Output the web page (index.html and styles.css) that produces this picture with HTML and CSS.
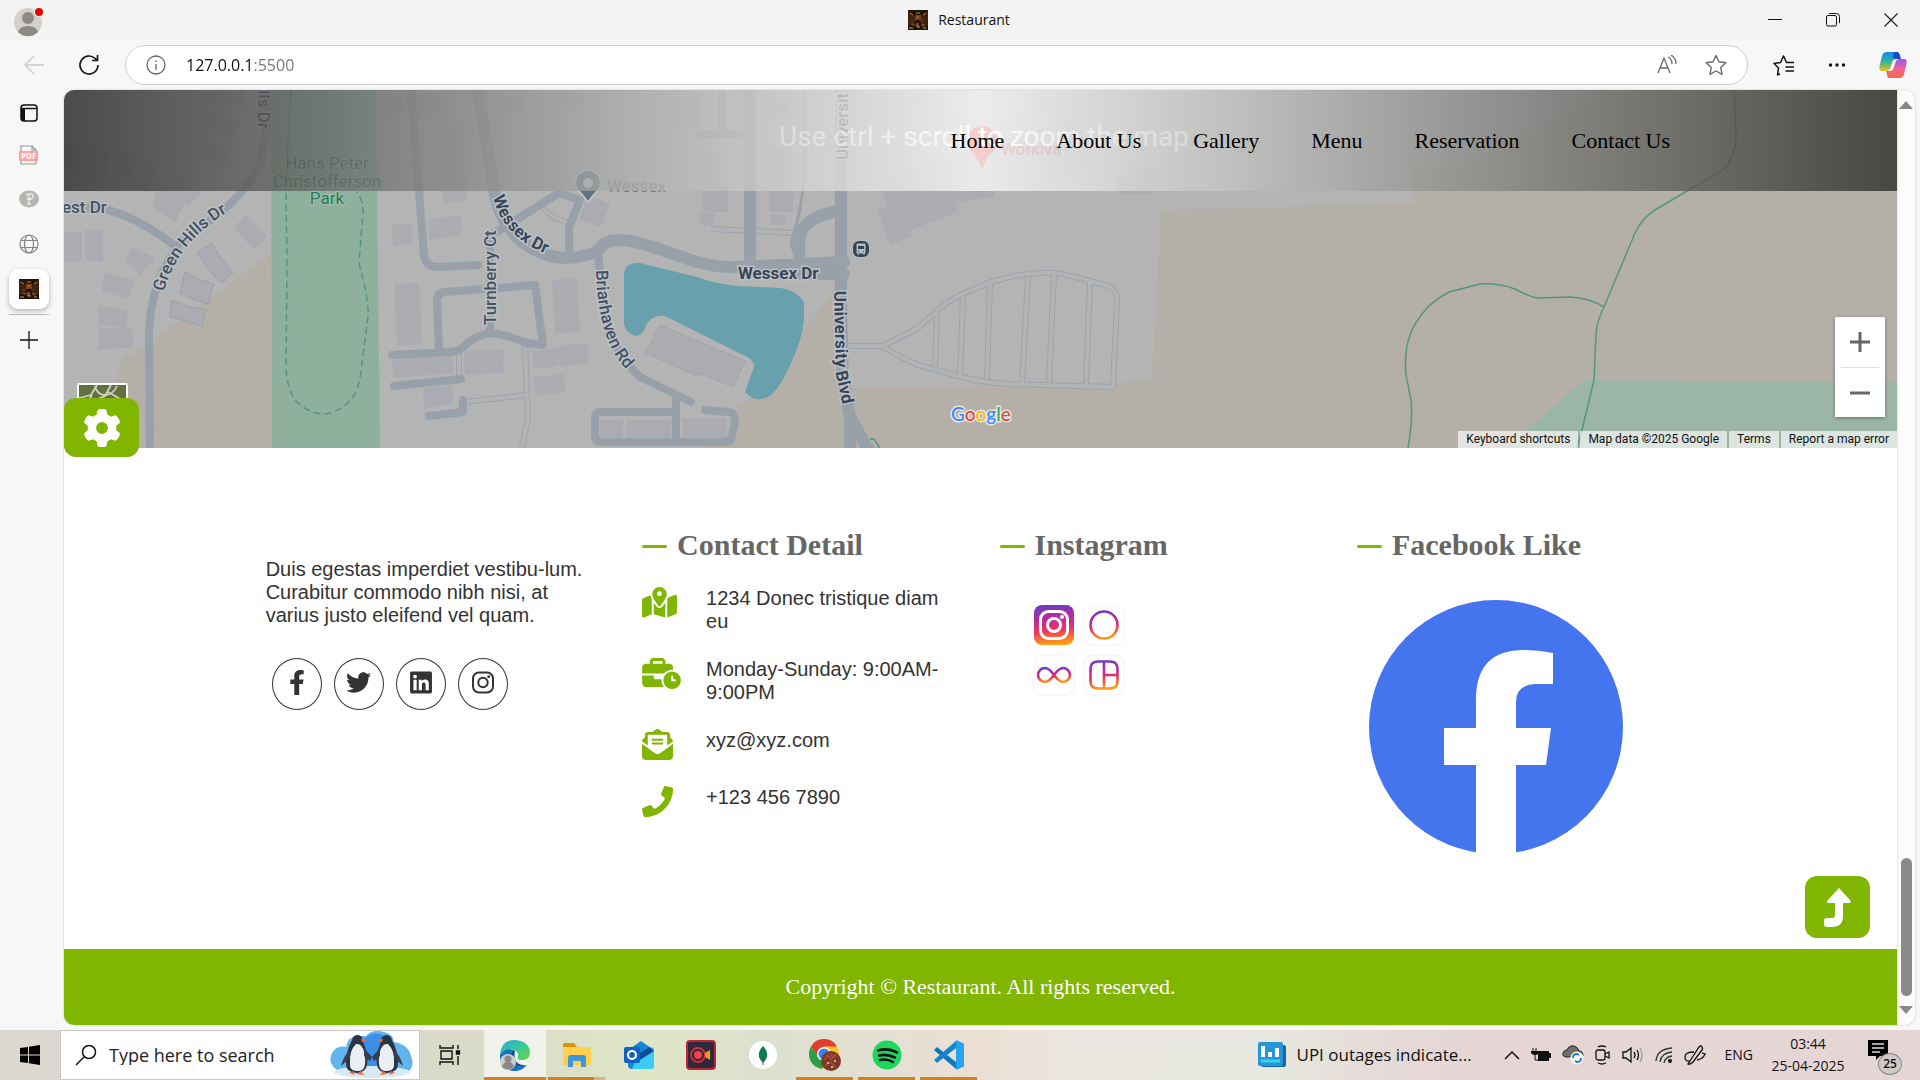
FILE: index.html
```html
<!DOCTYPE html>
<html lang="en">
<head>
<meta charset="utf-8">
<title>Restaurant</title>
<link rel="stylesheet" href="styles.css">
</head>
<body>
<svg class="defs" aria-hidden="true">
  <defs>
    <symbol id="bistro" viewBox="0 0 20 20">
      <rect width="20" height="20" fill="#20130a"/>
      <path d="M0 0l8 7v5l-8 4zM20 0l-8 7v5l8 4z" fill="#3d230f"/>
      <path d="M7 5h6v5H7z" fill="#7a4216"/>
      <path d="M2 3l3 2M18 3l-3 2M8 3h4M9 7h2" stroke="#c88028" stroke-width="1"/>
      <path d="M2 14l4-1v3zM13 13l5 2-4 2zM8 13h3v4H8z" fill="#8a4526"/>
      <path d="M1 18h4M9 17h3M15 18h3" stroke="#b8a878" stroke-width="1"/>
      <path d="M3 11h3M13 11h3M6 15h2" stroke="#3d5a24" stroke-width="1"/>
    </symbol>
    <linearGradient id="insta" x1="0.3" y1="0" x2="0.45" y2="1">
      <stop offset="0" stop-color="#6f3cc4"/><stop offset=".3" stop-color="#b52aa6"/><stop offset=".6" stop-color="#e62f62"/><stop offset="1" stop-color="#ff9a10"/>
    </linearGradient>
    <linearGradient id="instaFill" x1="0.3" y1="0" x2="0.4" y2="1">
      <stop offset="0" stop-color="#6a3cc4"/><stop offset=".35" stop-color="#bc2a9a"/><stop offset=".65" stop-color="#ee3560"/><stop offset="1" stop-color="#ffa210"/>
    </linearGradient>
    <linearGradient id="edge" x1="0" y1="0" x2="1" y2="1">
      <stop offset="0" stop-color="#2aa9dc"/><stop offset=".5" stop-color="#39c8a0"/><stop offset="1" stop-color="#6bd43a"/>
    </linearGradient>
    <linearGradient id="copA" x1="0" y1="0" x2="0" y2="1">
      <stop offset="0" stop-color="#1688f0"/><stop offset=".5" stop-color="#2fb59a"/><stop offset="1" stop-color="#f0c020"/>
    </linearGradient>
    <linearGradient id="copB" x1="0" y1="0" x2="0" y2="1">
      <stop offset="0" stop-color="#9a55f0"/><stop offset=".5" stop-color="#f0609a"/><stop offset="1" stop-color="#fa6a3a"/>
    </linearGradient>
  </defs>
</svg>

<header class="titlebar">
  <svg class="avatar" width="34" height="36" viewBox="0 0 34 36">
    <circle cx="14" cy="20" r="14" fill="#d2d0cb"/><circle cx="14" cy="16" r="6" fill="#8d8a86"/>
    <path d="M4 30c2-8 18-8 20 0a14 14 0 0 1-20 0z" fill="#8d8a86"/>
    <circle cx="25" cy="10" r="5" fill="#f3f3f3"/><circle cx="25" cy="10" r="4" fill="#e60000"/>
  </svg>
  <div class="window-title"><svg width="20" height="20"><use href="#bistro"/></svg><span>Restaurant</span></div>
  <div class="window-controls">
    <button aria-label="Minimize"><svg width="14" height="14" viewBox="0 0 14 14"><path d="M0 6.500h14" stroke="#111"/></svg></button>
    <button aria-label="Restore"><svg width="14" height="14" viewBox="0 0 14 14" fill="none" stroke="#111"><rect x=".5" y="2.500" width="10" height="10.500" rx="1.500"/><path d="M3 .5h7.500q3 0 3 3V10"/></svg></button>
    <button aria-label="Close"><svg width="14" height="14" viewBox="0 0 14 14"><path d="M.5.5l13 13M13.500.5l-13 13" stroke="#222" stroke-width="1.200"/></svg></button>
  </div>
</header>

<div class="toolbar">
  <button class="tool" aria-label="Back"><svg width="22" height="22" viewBox="0 0 22 22" fill="none" stroke="#c9c9c9" stroke-width="1.300"><path d="M21 11H2M11 2l-9 9 9 9"/></svg></button>
  <button class="tool" aria-label="Refresh"><svg width="22" height="22" viewBox="0 0 22 22" fill="none" stroke="#1a1a1a" stroke-width="1.700"><path d="M20 11a9 9 0 1 1-3-6.700L19 6"/><path d="M19.500 1v5.500H14"/></svg></button>
  <div class="address">
    <svg width="20" height="20" viewBox="0 0 20 20" fill="none" stroke="#666" stroke-width="1.300"><circle cx="10" cy="10" r="9"/><path d="M10 9v6M10 5.500v1.500"/></svg>
    <input type="text" aria-label="Address" value="127.0.0.1:5500">
    <svg width="20" height="20" viewBox="0 0 20 20" fill="none" stroke="#6a6a6a" stroke-width="1.300"><path d="M1 18L7 3l6 15M3 13h8M11 2q4 2 4 7M14 0q5 3 5 9"/></svg>
    <svg width="22" height="22" viewBox="0 0 22 22" fill="none" stroke="#6a6a6a" stroke-width="1.400" stroke-linejoin="round"><path d="M11 1.500l3 6.300 6.800 1-5 4.700 1.200 6.800-6-3.300-6 3.300 1.200-6.800-5-4.700 6.800-1z"/></svg>
  </div>
  <button class="tool" aria-label="Favorites"><svg width="22" height="22" viewBox="0 0 22 22" fill="none" stroke="#111" stroke-width="1.500" stroke-linejoin="round"><path d="M7 20l-2.500.8 1-6.800L1 9.500l6.500-1L10.500 2l3 6.500H21M12.500 13H21M12.500 17H21"/></svg></button>
  <button class="tool" aria-label="Settings and more"><svg width="18" height="6" viewBox="0 0 18 6" fill="#111"><circle cx="2.500" cy="3" r="1.700"/><circle cx="9" cy="3" r="1.700"/><circle cx="15.500" cy="3" r="1.700"/></svg></button>
  <button class="tool" aria-label="Copilot"><svg width="28" height="28" viewBox="0 0 28 28">
    <path d="M8 1h10q2 0 3 4l1 3h-5q-3 0-4 4l-2 6q-1 2-4 2H3q-4 0-2-7l2-8q1-4 5-4z" fill="url(#copA)"/>
    <path d="M15 1h3q2 0 3 4l1 3h-5q-3 0-3-3z" fill="#1a48c8"/>
    <path d="M20 27H10q-2 0-2-4l-1-3h4q3 0 4-4l2-6q1-2 4-2h4q4 0 2 7l-2 8q-1 4-5 4z" fill="url(#copB)"/>
  </svg></button>
</div>

<div class="workspace">
  <nav class="tabs" aria-label="Open tabs">
    <button aria-label="Tab actions"><svg width="18" height="18" viewBox="0 0 18 18"><rect x="1" y="1" width="16" height="16" rx="3" fill="none" stroke="#111" stroke-width="1.500"/><path d="M1 4.500h16" stroke="#111" stroke-width="1.500"/><path d="M1 5h4v12H3l-2-2z" fill="#111"/></svg></button>
    <button aria-label="PDF"><svg width="20" height="20" viewBox="0 0 20 20"><path d="M2 6V1h11l4 4v1M2 16v3h15v-3M13 1v4h4" fill="none" stroke="#999" stroke-width="1.200"/><rect x="0" y="6" width="19" height="10" fill="#fba3a3"/><text x="2" y="14" class="pdf">PDF</text></svg></button>
    <button aria-label="Site"><svg width="20" height="18" viewBox="0 0 20 18"><ellipse cx="10" cy="9" rx="10" ry="8.500" fill="#b2b8ae"/><path d="M7 5q7-3 7 1 0 4-6 3M10 4v10M8 14h4" fill="none" stroke="#e8ebe6" stroke-width="1.400"/></svg></button>
    <button aria-label="Web page"><svg width="20" height="20" viewBox="0 0 20 20" fill="none" stroke="#858585" stroke-width="1.200"><circle cx="10" cy="10" r="9"/><ellipse cx="10" cy="10" rx="4.500" ry="9"/><path d="M2 6.500h16M2 13.500h16"/></svg></button>
    <button class="current" aria-label="Restaurant"><svg width="20" height="20"><use href="#bistro"/></svg></button>
    <hr>
    <button aria-label="New tab"><svg width="18" height="18" viewBox="0 0 18 18"><path d="M9 0v18M0 9h18" stroke="#111" stroke-width="1.300"/></svg></button>
  </nav>

  <main class="page">
    <nav class="menu">
      <a href="#home">Home</a><a href="#about">About Us</a><a href="#gallery">Gallery</a><a href="#menu">Menu</a><a href="#reservation">Reservation</a><a href="#contact">Contact Us</a>
    </nav>

    <section class="map" aria-label="Map">
      <svg class="map-art" viewBox="64 90 1833 358" preserveAspectRatio="xMinYMin slice">
        <rect x="64" y="90" width="1833" height="358" fill="#b4b4b4"/>
        <path d="M271 254L153 340 133 354 124 356 115 383V448H272zM834 293L803 330 787 373 736 408 738 437 701 448H1897V90H1606L1468 163H1413V204L1280 207 1161 210 1152 382 1011 385 854 388 842 360z" fill="#b4afa7"/>
        <path d="M271 90H376L380 448H272z" fill="#8fb09c"/>
        <path d="M1584 380L1897 382V448H1505z" fill="#9bb5a6"/>
        <g fill="#abacb2">
          <path d="M206 90h38v17h-38zM209 111l33 9-8 18-31-9zM204 136l30 14-13 17-23-16zM64 145h16v28H64zM88 149l20 2-3 31-20-1zM119 148l19 3-6 28-19-3zM139 161l20 7-12 25-15-6zM177 173l25 20-14 14-20-16zM158 183l28 18-11 22-23-17z"/>
          <path d="M64 232h18v30H64zM85 230h18v31H85zM132 247l24 11-16 17-14-14zM104 273l31 7-6 19-27-8zM99 305l29 6-2 16-28-2zM99 329l32-2 3 20-36 3zM245 214l22 22-13 14-20-22z"/>
          <path d="M384 96h18v22h-18zM414 96h35v21h-35zM436 125l26-2 5 78-24 2zM428 219l33-4 1 20-33 5zM392 225l19-2 2 20-20 3zM394 284l25-2 3 62-25 2zM552 280l25-2 3 54-25 2zM392 360l60-5 2 18-60 5zM423 388l29-3 1 19-29 5zM464 352l40-3-1 24-38 2zM533 351l26-3v18l-25 3zM559 346l28-3 2 20-29 4zM534 377l30-3 1 18-30 4zM588 195l22 9-9 23-22-8zM503 96h22v15h-22zM560 95h25v14h-25z"/>
          <path d="M672 96h27v29h-27zM703 150h25v62h-25zM700 213h14v12h-14zM769 150h24v62h-24zM771 214h15v11h-15zM768 98h22v19h-22zM1082 117l-204 60 9 30-9 3 12 35 21-9v-6l47-18-2-10 37-5 1-5 34-9 5 10 22-9 35-16zM1115 178l20-12 30 8-16 20h-29zM600 420h23v20h-23zM626 420h45v20h-45zM683 418h44v20h-44z"/>
          <path d="M197 253l15-10 8 13 4 6 9 10-11 11-9-8-5-8zM185 272l13 7 16 5-6 20-16-5-12-6zM171 300l17 6 18 4-4 16-32-9z" stroke="#9ca0ab"/>
          <path d="M646 353L660 325 745 361 733 387 700 373 697 376z" stroke="#a0a4ad"/>
        </g>
        <g fill="none" stroke="#9fa3a9" stroke-width="6" stroke-linejoin="round">
          <path d="M846 346H883L918 328 946 303 967 292 991 282Q1028 271 1056 273 1075 276 1111 287 1117 291 1117 300L1113 387 1007 384Q980 382 958 376L918 365Q895 355 883 346M937 315L935 367M963 297L960 375M990 283L987 378M1028 277L1022 383M1054 275L1049 383M1090 282L1086 384M459 353V380M525 343L527 397 528 417 522 448M465 402L527 395M542 205Q545 215 568 223M795 233L711 229"/>
          <path stroke="#b1b3b5" stroke-width="4" d="M846 346H883L918 328 946 303 967 292 991 282Q1028 271 1056 273 1075 276 1111 287 1117 291 1117 300L1113 387 1007 384Q980 382 958 376L918 365Q895 355 883 346M937 315L935 367M963 297L960 375M990 283L987 378M1028 277L1022 383M1054 275L1049 383M1090 282L1086 384M459 353V380M525 343L527 397 528 417 522 448M465 402L527 395M542 205Q545 215 568 223M795 233L711 229"/>
          <path d="M918 95Q930 123 984 124T1046 92" stroke="#a8aaac" stroke-width="5"/><path d="M918 95Q930 123 984 124T1046 92" stroke="#b1b3b5" stroke-width="3"/>
        </g>
        <path d="M624 275Q624 262 640 263L697 277Q715 284 740 286L780 288Q795 289 804 302V320Q802 340 791 363 782 385 771 395 757 405 745 392L754 367Q754 360 747 357L669 318Q658 312 648 322L644 330Q640 338 633 335 624 330 624 323z" fill="#68a0ae"/>
        <g fill="none" stroke="#98a0aa" stroke-width="8" stroke-linejoin="round" stroke-linecap="round">
          <path d="M267 90V125L261 160Q253 185 220 213L180 243Q160 270 153 300 149 320 149 333L150 452"/>
          <path d="M60 208H100Q135 215 175 246M411 90L424 255Q425 267 438 267L478 265M559 193L490 236V333M559 193L580 200 569 227V255M439 350L437 300Q437 293 445 292L535 285 543 345 527 343Q508 335 492 333 480 334 469 342 460 352 450 352L392 355M394 386L461 379M429 416L463 412V400"/>
          <path d="M598 253L603 300Q606 345 640 377L691 402M676 400V441M676 412H600Q595 412 595 418V436Q595 442 601 442H725Q731 442 732 436L735 421Q735 412 728 412L705 410M722 90V133M701 134H740"/>
          <path d="M805 90V140Q806 200 791 243L794 253" stroke-width="3"/>
          <g stroke-width="12"><path d="M478 90L494 190Q503 240 547 255 570 262 596 252L605 243Q620 236 650 246L697 262Q720 268 738 267L844 262M750 90V258M799 262V240Q800 218 841 210M844 274H780"/><path d="M841 86V300L843 380 850 417 870 452M850 417V452"/></g>
        </g>
        <g fill="none" stroke="#559681" stroke-width="1.500">
          <path d="M291 90L287 160"/><path d="M287 160L286 200 287 260 286 370Q288 390 295 400 309 414 324 414 340 413 353 397 360 385 361 370L368 317Q369 300 359 263L363 213Q363 200 357 192" stroke-dasharray="7 4"/>
          <path d="M1734 90L1736 133Q1737 152 1725 168 1715 176 1692 188L1655 210Q1643 217 1635 233L1604 307Q1597 320 1596 335L1594 380 1582 430 1577 448M1604 307Q1590 298 1570 297L1537 298Q1528 296 1515 289 1498 283 1480 284L1449 292Q1436 299 1427 308 1414 323 1410 335 1404 352 1406 375L1411 400Q1413 420 1408 448M870 439h4l6 9"/>
        </g>
        <g class="street">
          <path id="hills" d="M164 292Q176 244 226 213" fill="none"/>
          <path id="wessex" d="M493 197Q504 242 560 259" fill="none"/>
          <path id="briar" d="M596 270Q598 348 632 374" fill="none"/>
          <path id="univ" d="M834 291L836 375 847 425" fill="none"/>
          <text><textPath href="#hills">Green Hills Dr</textPath></text>
          <text class="bold"><textPath href="#wessex">Wessex Dr</textPath></text>
          <text><textPath href="#briar">Briarhaven Rd</textPath></text>
          <text class="bold"><textPath href="#univ">University Blvd</textPath></text>
          <text class="bold" x="738" y="279">Wessex Dr</text>
          <text x="62" y="213">est Dr</text>
          <text transform="translate(496 325) rotate(-90)">Turnberry Ct</text>
          <text transform="translate(258 90) rotate(90)">lls Dr</text>
          <text transform="translate(848 160) rotate(-90)">Universit</text>
        </g>
        <g class="park" text-anchor="middle"><text x="327" y="169">Hans Peter</text><text x="327" y="187">Christofferson</text><text x="327" y="204">Park</text></g>
        <path d="M588 202l-7-9a12.500 12.500 0 1 1 14 0z" fill="#5c7380" stroke="#c5c8ca" stroke-width="1.500"/><circle cx="588" cy="183" r="5" fill="#ccd0d2"/>
        <text class="place" x="607" y="192">Wessex</text>
        <path d="M982 171q-2-10-9-18a15 15 0 1 1 18 0q-7 8-9 18z" fill="#cf3f3a"/>
        <text class="brand" x="1001" y="155">Workiva</text>
        <circle cx="861" cy="249" r="9" fill="#bcc2c6"/><rect x="853" y="241" width="16" height="16" rx="6" fill="#344554"/><path d="M857 244h8v9h-8zM858 253v2M864 253v2" fill="#b8bcc0" stroke="#b8bcc0"/><path d="M858 246h6v3h-6zM858 251h1v1h-1zM863 251h1v1h-1z" fill="#344554"/>
        <text class="hint" x="779" y="146">Use ctrl + scroll to zoom the map</text>
        <text class="logo" x="951" y="421"><tspan fill="#4285f4">G</tspan><tspan fill="#ea4335">o</tspan><tspan fill="#fbbc05">o</tspan><tspan fill="#4285f4">g</tspan><tspan fill="#34a853">l</tspan><tspan fill="#ea4335">e</tspan></text>
        <g><rect x="77" y="383" width="51" height="30" rx="2" fill="#fff"/><path d="M79 385h47v28H79z" fill="#62713f"/><path d="M79 398l12-3 6-10M95 400l10-4 6-11M95 386q2 9 10 9t12-9M92 395l-5 8M108 392l16 9" stroke="#d2d0c6" stroke-width="1.800" fill="none"/></g>
      </svg>
      <div class="zoom-box">
        <button aria-label="Zoom in"><svg width="22" height="22" viewBox="0 0 22 22"><path d="M11 1v20M1 11h20" stroke="#666" stroke-width="3"/></svg></button>
        <button aria-label="Zoom out"><svg width="22" height="22" viewBox="0 0 22 22"><path d="M1 11h20" stroke="#666" stroke-width="3"/></svg></button>
      </div>
      <div class="credits"><button>Keyboard shortcuts</button><span>Map data ©2025 Google</span><a href="#terms">Terms</a><a href="#report">Report a map error</a></div>
    </section>

    <button class="badge gear" aria-label="Settings"><svg width="38" height="38" viewBox="0 0 512 512" fill="#fff"><path d="M495.900 166.600c3.200 8.700 .5 18.400-6.400 24.600l-43.300 39.400c1.100 8.300 1.700 16.800 1.700 25.400s-.6 17.100-1.700 25.400l43.300 39.400c6.900 6.200 9.600 15.900 6.400 24.600c-4.400 11.900-9.700 23.300-15.800 34.300l-4.700 8.100c-6.600 11-14 21.400-22.100 31.200c-5.900 7.200-15.700 9.600-24.500 6.800l-55.700-17.700c-13.400 10.300-28.200 18.900-44 25.400l-12.500 57.100c-2 9.100-9 16.300-18.200 17.800c-13.800 2.300-28 3.500-42.500 3.500s-28.700-1.200-42.500-3.500c-9.200-1.500-16.200-8.700-18.200-17.800l-12.500-57.100c-15.800-6.500-30.600-15.100-44-25.400L83.100 425.900c-8.800 2.800-18.600 .3-24.500-6.800c-8.100-9.800-15.500-20.200-22.100-31.200l-4.700-8.100c-6.100-11-11.400-22.400-15.800-34.300c-3.200-8.700-.5-18.400 6.400-24.600l43.300-39.400C64.600 273.100 64 264.600 64 256s.6-17.100 1.700-25.400L22.400 191.200c-6.900-6.200-9.600-15.900-6.400-24.600c4.400-11.900 9.700-23.300 15.800-34.300l4.700-8.100c6.600-11 14-21.400 22.100-31.200c5.900-7.200 15.700-9.600 24.500-6.800l55.700 17.700c13.400-10.300 28.200-18.900 44-25.400l12.500-57.100c2-9.100 9-16.300 18.200-17.800C227.300 1.200 241.500 0 256 0s28.700 1.200 42.500 3.500c9.200 1.500 16.200 8.700 18.200 17.800l12.500 57.100c15.800 6.500 30.600 15.100 44 25.400l55.700-17.700c8.800-2.800 18.600-.3 24.500 6.800c8.100 9.800 15.500 20.200 22.100 31.200l4.700 8.100c6.100 11 11.400 22.400 15.800 34.300zM256 336a80 80 0 1 0 0-160 80 80 0 1 0 0 160z"/></svg></button>

    <footer class="info">
      <section class="about">
        <p>Duis egestas imperdiet vestibu-lum. Curabitur commodo nibh nisi, at varius justo eleifend vel quam.</p>
        <div class="social">
          <a href="#facebook" aria-label="Facebook"><svg width="16" height="25" viewBox="0 0 320 512"><path d="M279.100 288l14.300-92.700h-89v-60.100c0-25.300 12.400-50 52.200-50h40.400V6.300S260.400 0 225.400 0C152.100 0 104.200 44.400 104.200 124.700v70.600H22.900V288h81.300v224h100.200V288z"/></svg></a>
          <a href="#twitter" aria-label="Twitter"><svg width="25" height="25" viewBox="0 0 512 512"><path d="M459.400 151.700c.3 4.500 .3 9.100 .3 13.600 0 138.700-105.600 298.600-298.600 298.600-59.500 0-114.700-17.200-161.100-47.100 8.400 1 16.600 1.300 25.300 1.300 49.100 0 94.200-16.600 130.300-44.800-46.100-1-84.800-31.200-98.100-72.800 6.500 1 13 1.600 19.800 1.600 9.400 0 18.800-1.300 27.600-3.600-48.100-9.700-84.100-52-84.100-103v-1.300c14 7.800 30.200 12.700 47.400 13.300-28.300-18.800-46.800-51-46.800-87.400 0-19.500 5.200-37.400 14.300-53 51.700 63.700 129.300 105.300 216.400 109.800-1.600-7.800-2.600-15.900-2.600-24 0-57.800 46.800-104.900 104.900-104.900 30.200 0 57.500 12.700 76.700 33.100 23.700-4.500 46.500-13.300 66.600-25.300-7.800 24.400-24.400 44.800-46.100 57.800 21.100-2.300 41.600-8.100 60.400-16.200-14.300 20.800-32.200 39.300-52.600 54.300z"/></svg></a>
          <a href="#linkedin" aria-label="LinkedIn"><svg width="22" height="25" viewBox="0 0 448 512"><path d="M416 32H31.900C14.300 32 0 46.500 0 64.300v383.400C0 465.500 14.300 480 31.900 480H416c17.600 0 32-14.500 32-32.300V64.300c0-17.800-14.400-32.300-32-32.300zM135.400 416H69V202.200h66.500V416zM102.200 96a38.500 38.500 0 1 1 0 77 38.500 38.500 0 0 1 0-77zM384.300 416h-66.400V312c0-24.800-.5-56.700-34.500-56.700-34.600 0-39.900 27-39.900 54.900V416h-66.400V202.200h63.700v29.200h.9c8.900-16.800 30.600-34.500 62.900-34.500 67.200 0 79.700 44.300 79.700 101.900V416z"/></svg></a>
          <a href="#instagram" aria-label="Instagram"><svg width="22" height="25" viewBox="0 0 22 25"><g fill="none" stroke="#333" stroke-width="2"><rect x="1" y="2.500" width="20" height="20" rx="6"/><circle cx="11" cy="12.500" r="4.700"/></g><circle cx="16.700" cy="6.700" r="1.400"/></svg></a>
        </div>
      </section>

      <section>
        <h2>Contact Detail</h2>
        <ul class="contact">
          <li><svg width="35" height="31" viewBox="0 0 576 512"><path d="M408 120c0 54.600-73.100 151.900-105.200 192c-7.700 9.600-22 9.600-29.600 0C241.100 271.900 168 174.600 168 120C168 53.700 221.700 0 288 0s120 53.700 120 120zm8 80.400c3.500-6.900 6.700-13.800 9.600-20.600c.5-1.200 1-2.500 1.500-3.700l116-46.400C558.900 123.400 576 135 576 152V422.800c0 9.800-6 18.600-15.100 22.300L416 503V200.400zM137.600 138.300c2.400 14.100 7.200 28.300 12.800 41.500c2.900 6.800 6.100 13.700 9.600 20.600V451.800L32.900 502.700C17.100 509 0 497.400 0 480.400V209.600c0-9.800 6-18.600 15.100-22.300l122.600-49zM327.800 332c13.900-17.400 35.700-45.700 56.200-77V504.300L192 449.400V255c20.500 31.300 42.300 59.600 56.200 77c20.500 25.600 59.100 25.600 79.600 0zM288 152a40 40 0 1 0 0-80 40 40 0 1 0 0 80z"/></svg><span>1234 Donec tristique diam eu</span></li>
          <li><svg width="39" height="31" viewBox="0 0 640 512"><path d="M184 48H328c4.400 0 8 3.600 8 8V96H176V56c0-4.400 3.600-8 8-8zm-56 8V96H64C28.700 96 0 124.700 0 160v96H192 352h8.200c32.300-39.100 81.100-64 135.800-64c5.400 0 10.700 .2 16 .7V160c0-35.300-28.700-64-64-64H384V56c0-30.900-25.100-56-56-56H184c-30.900 0-56 25.100-56 56zM320 352H224c-17.700 0-32-14.300-32-32V288H0V416c0 35.300 28.700 64 64 64H360.200C335.100 449.600 320 410.500 320 368c0-5.400 .2-10.700 .7-16zm320 16a144 144 0 1 0 -288 0 144 144 0 1 0 288 0zM496 288c8.800 0 16 7.200 16 16v48h32c8.800 0 16 7.200 16 16s-7.200 16-16 16H496c-8.800 0-16-7.200-16-16V304c0-8.800 7.200-16 16-16z"/></svg><span>Monday-Sunday: 9:00AM-9:00PM</span></li>
          <li><svg width="31" height="31" viewBox="0 0 512 512"><path d="M215.400 96H144 107.800 96v8.800V144v40.400 89L.2 202.500c1.600-18.100 10.900-34.900 25.700-45.800L48 140.300V96c0-26.500 21.500-48 48-48h76.600l49.900-36.900C232.200 3.900 243.900 0 256 0s23.800 3.900 33.500 11L339.400 48H416c26.500 0 48 21.500 48 48v44.300l22.100 16.400c14.800 10.900 24.100 27.700 25.700 45.800L416 273.400v-89V144 104.800 96H404.200 368 296.600 215.400zM0 448V242.100L217.600 403.300c11.100 8.200 24.600 12.700 38.400 12.700s27.300-4.400 38.400-12.700L512 242.100V448c0 35.300-28.700 64-64 64H64c-35.300 0-64-28.700-64-64zM176 160H336c8.800 0 16 7.200 16 16s-7.200 16-16 16H176c-8.800 0-16-7.200-16-16s7.200-16 16-16zm0 64H336c8.800 0 16 7.200 16 16s-7.200 16-16 16H176c-8.800 0-16-7.200-16-16s7.200-16 16-16z"/></svg><span>xyz@xyz.com</span></li>
          <li><svg width="31" height="31" viewBox="0 0 512 512"><path d="M493.400 24.600l-104-24c-11.300-2.600-22.900 3.300-27.500 13.900l-48 112c-4.200 9.800-1.400 21.300 6.900 28l60.600 49.600c-36 76.700-98.900 140.500-177.200 177.200l-49.600-60.600c-6.800-8.300-18.200-11.100-28-6.900l-112 48C3.900 366.500-2 378.100.6 389.400l24 104C27.100 504.200 36.700 512 48 512c256.100 0 464-207.500 464-464 0-11.200-7.700-20.900-18.600-23.400z"/></svg><span>+123 456 7890</span></li>
        </ul>
      </section>

      <section>
        <h2>Instagram</h2>
        <svg class="insta" width="92" height="92" viewBox="0 0 92 92" role="img" aria-label="Instagram app icons">
          <rect x="0" y="0" width="40" height="40" rx="8" fill="url(#instaFill)"/>
          <g fill="none" stroke="#fff" stroke-width="3"><rect x="6.500" y="6.500" width="27" height="27" rx="8"/><circle cx="20" cy="20" r="6.500"/></g><circle cx="28" cy="12" r="2" fill="#fff"/>
          <g fill="#fff" stroke="#f2f2f2"><rect x="50" y="0" width="40" height="40" rx="8"/><rect x="0" y="50" width="40" height="40" rx="8"/><rect x="50" y="50" width="40" height="40" rx="8"/></g>
          <g fill="none" stroke="url(#insta)" stroke-width="2.600"><circle cx="70" cy="20" r="13.500"/><path d="M20 70q-5-7-9-7a7 7 0 0 0 0 14q4 0 9-7 5-7 9-7a7 7 0 0 1 0 14q-4 0-9-7z"/><path d="M64 56.500H76Q83.500 56.500 83.500 64V76Q83.500 83.500 76 83.500H64Q56.500 83.500 56.500 76V64Q56.500 56.500 64 56.500M70 57V83M70 70H83"/></g>
        </svg>
      </section>

      <section>
        <h2>Facebook Like</h2>
        <svg class="fb" width="254" height="254" viewBox="1369 600 254 254" role="img" aria-label="Facebook">
          <circle cx="1496" cy="727" r="127" fill="#4475ee"/>
          <path d="M1476 856V765H1444V728H1476V697Q1477 650 1524 650 1539 650 1553 653V684H1535Q1516 685 1516 702V728H1551L1546 765H1516V856z" fill="#fff"/>
        </svg>
      </section>
      <button class="badge top" aria-label="Back to top"><svg width="28" height="40" viewBox="0 0 28 40"><path d="M15 1L26 13q2 3-1 3H19V29Q19 40 8 40H3Q0 40 0 37V34Q0 31 3 31H8Q11 31 11 28V16H5Q1 16 4 13z" fill="#fff"/></svg></button>
    </footer>
    <div class="copyright">Copyright © Restaurant. All rights reserved.</div>
  </main>

  <div class="scrollbar">
    <svg width="14" height="8" viewBox="0 0 14 8"><path d="M7 0l7 8H0z" fill="#888"/></svg>
    <div class="thumb"></div>
    <svg width="14" height="8" viewBox="0 0 14 8"><path d="M7 8l7-8H0z" fill="#888"/></svg>
  </div>
</div>

<div class="taskbar">
  <button class="start" aria-label="Start"><svg width="20" height="20" viewBox="0 0 20 20"><path d="M0 3l8-1v7.500H0zM9 1.800L20 0v9.500H9zM0 10.500h8V18l-8-1zM9 10.500h11V20L9 18.200z"/></svg></button>
  <label class="search">
    <svg width="22" height="22" viewBox="0 0 22 22" fill="none" stroke="#111" stroke-width="1.500"><circle cx="14" cy="8" r="6.500"/><path d="M9.500 12.500L1 21"/></svg>
    <input type="text" aria-label="Search" placeholder="Type here to search">
    <svg width="84" height="48" viewBox="0 0 84 48">
      <path d="M12 42Q-4 34 2 22q5-8 14-6Q18 4 30 5h6Q42-2 54 1q9 2 10 10 14 2 17 14 5 12-6 18z" fill="#62b5ec"/><path d="M34 8q10-10 22-2 4 3 4 10L48 36H34z" fill="#3d8ee6"/>
      <ellipse cx="42" cy="41" rx="38" ry="6" fill="#d7e9f5"/>
      <g id="penguin"><path d="M22 9q1-5 6-5 5 1 5 6 1 4 3 9 3 10 0 18-3 5-10 5-10-1-10-9 0-13 6-24z" fill="#2b3440"/><path d="M26 13q6-1 8 8 4 18-5 19-10 1-9-8-1-12 6-19z" fill="#e9eef5"/><path d="M31 8l6 1-5 2z" fill="#ee7036"/><path d="M21 17q-8 9-10 18l8-7zM34 17l8 9-2 4-6-5z" fill="#36404d"/><path d="M26 43l5-3 3 4zM19 42l4-2 2 4z" fill="#ee6c3b"/></g>
      <use href="#penguin" transform="translate(84 0) scale(-1 1)"/>
    </svg>
  </label>
  <button class="app task-view" aria-label="Task view"><svg width="22" height="22" viewBox="0 0 22 22" fill="none" stroke="#111" stroke-width="1.400"><path d="M1 1v3h13V1M1 21v-3h13v3M2 7h11v8H2zM19 1v4M19 12v9"/><path d="M17.500 7h3v3h-3z" fill="#111"/></svg></button>
  <button class="app active open" aria-label="Edge"><svg width="32" height="32" viewBox="0 0 32 32"><path d="M1 16Q2 1 16 1q14 1 15 12 0 8-8 8-6 0-4-4 1-4-4-6Q8 9 1 16z" fill="url(#edge)"/><path d="M1 16q5-8 13-5-4 5-2 11 3 8 16 4-6 7-15 6Q0 28 1 16z" fill="#1472c0"/><path d="M14 11q-4 5-2 11 3 8 16 4-10 1-12-6-1-5 0-8z" fill="#0d4f96"/><circle cx="9" cy="23" r="8" fill="#cfcdca"/><circle cx="9" cy="20" r="3.500" fill="#8b8987"/><path d="M3 28q1-5 6-5t6 5q-6 5-12 0z" fill="#8b8987"/></svg></button>
  <button class="app open stacked" aria-label="File Explorer"><svg width="28" height="26" viewBox="0 0 28 26"><path d="M0 3q0-2 2-2h9l3 4H0z" fill="#d9930d"/><path d="M0 5h26q2 0 2 2v16H0z" fill="#ffcf4d"/><path d="M5 25V16q0-3 3-3h12q3 0 3 3v9h-5v-6h-8v6z" fill="#3f95da"/></svg></button>
  <button class="app" aria-label="Outlook"><svg width="30" height="28" viewBox="0 0 30 28"><path d="M4 9L17 0l13 9v15q0 4-4 4H8q-4 0-4-4z" fill="#1683d8"/><path d="M14 14l16-8v18q0 4-4 4H8z" fill="#3ccbf4"/><path d="M12 14L26 6l4 4-14 9z" fill="#0b4c9c"/><rect x="0" y="6" width="16" height="16" rx="2" fill="#0f62bd"/><circle cx="8" cy="14" r="4" fill="none" stroke="#fff" stroke-width="2.200"/></svg></button>
  <button class="app" aria-label="Screen recorder"><svg width="30" height="30" viewBox="0 0 30 30"><rect x="1" y="1" width="28" height="28" rx="3" fill="#2d2a40" stroke="#c22532" stroke-width="2"/><circle cx="12" cy="15" r="7" fill="none" stroke="#e22a34" stroke-width="1.800"/><circle cx="12" cy="15" r="4" fill="#f04048"/><path d="M19 13l5-3v10l-5-3z" fill="#f39b12"/></svg></button>
  <button class="app" aria-label="MongoDB"><svg width="28" height="28" viewBox="0 0 28 28"><circle cx="14" cy="14" r="14" fill="#fff"/><path d="M14 5q5 5 4 11-1 3-4 6-3-3-4-6-1-6 4-11z" fill="#0e7d4e"/><path d="M14 16v8" stroke="#355" /></svg></button>
  <button class="app open" aria-label="Chrome"><svg width="32" height="32" viewBox="0 0 32 32"><circle cx="15" cy="15" r="15" fill="#f8c12c"/><path d="M2 7.500A15 15 0 0 1 28 7.500H15L9 18z" fill="#e33b2e"/><path d="M2 7.500L10 19l6 3-3 8A15 15 0 0 1 2 7.500z" fill="#2c9f4b"/><circle cx="15" cy="15" r="7" fill="#fff"/><circle cx="15" cy="15" r="5.500" fill="#3b7ded"/><circle cx="22" cy="22" r="10" fill="#7a3828"/><path d="M15 21l4-5 3 4 5-5M16 27l5-4 6 5M22 14l1 3" stroke="#a84a3a" stroke-width="2" fill="none"/><path d="M18 24h2M25 22h2M22 28h2" stroke="#dcae70" stroke-width="2"/></svg></button>
  <button class="app open" aria-label="Spotify"><svg width="30" height="30" viewBox="0 0 30 30"><circle cx="15" cy="15" r="14.500" fill="#1ed760"/><path d="M6 10.500q10-3 19 2M7 15.500q8-2 16 2M8 20q7-1.500 13 2" fill="none" stroke="#111" stroke-width="2.600" stroke-linecap="round"/></svg></button>
  <button class="app open" aria-label="Visual Studio Code"><svg width="30" height="30" viewBox="0 0 30 30"><path d="M0 10l3-3 19 15v7L1 11z" fill="#0f78bd"/><path d="M0 20l3 3L22 8V1L1 19z" fill="#1486cf"/><path d="M22 0l8 3.500v23L22 30z" fill="#2aa3ef"/></svg></button>

  <div class="tray">
    <svg width="28" height="26" viewBox="0 0 28 26"><rect x="3" y="3" width="25" height="22" rx="2" fill="#1568b0"/><rect width="25" height="24" rx="2" fill="#2597d6"/><path d="M5 4v11M12 10v5M19 6v9" stroke="#fff" stroke-width="4"/><path d="M3 19h19" stroke="#33d3ee" stroke-width="3"/></svg>
    <span class="news">UPI outages indicate...</span>
    <svg width="16" height="10" viewBox="0 0 16 10" fill="none" stroke="#111" stroke-width="1.500"><path d="M1 9l7-7 7 7"/></svg>
    <svg width="20" height="14" viewBox="0 0 20 14"><path d="M2 0v3M5 0v3M4 7v5h3" stroke="#111" fill="none"/><path d="M0 3h7v2q0 2-3 2t-4-2z" fill="#111"/><path d="M7 3h11v2h2v5h-2v3H7z" fill="#111"/></svg>
    <svg width="22" height="20" viewBox="0 0 22 20"><path d="M5 12Q0 12 1 8q1-3 4-3 2-5 7-4 4 1 5 5 4 0 4 5z" fill="#6f6f6f" stroke="#222"/><circle cx="15" cy="13" r="6.500" fill="#fff"/><path d="M11 13q0-4 4-4l2 1M19 13q0 4-4 4l-2-1" fill="none" stroke="#1a75cf" stroke-width="1.800"/></svg>
    <svg width="16" height="20" viewBox="0 0 16 20" fill="none" stroke="#111" stroke-width="1.300"><rect x="1" y="5" width="9" height="10" rx="2"/><path d="M10 9l4-2v6l-4-2M3 2q4-2 8 0M3 18q4 2 8 0"/></svg>
    <svg width="22" height="18" viewBox="0 0 22 18" fill="none" stroke="#111" stroke-width="1.300"><path d="M1 6h3l5-4v14l-5-4H1zM12 6q2 3 0 6M15 4q3 5 0 10"/><path d="M18 2q4 7 0 14" stroke="#999"/></svg>
    <svg width="18" height="18" viewBox="0 0 18 18" fill="none" stroke="#333" stroke-width="1.300"><path d="M1 15Q2 3 17 2M5 16Q6 7 17 6M9 17q1-6 8-7"/><circle cx="15" cy="15" r="1.500" fill="#111"/></svg>
    <svg width="22" height="20" viewBox="0 0 22 20" fill="none" stroke="#111" stroke-width="1.300"><path d="M6 16L15 2q2-2 3 0 1 2 0 3L9 17q-3 3-5 2zM10 7Q1 7 1 12q0 5 5 4M13 15q6-1 8-6l-3-1"/></svg>
    <span class="lang">ENG</span>
    <div class="clock"><span>03:44</span><span>25-04-2025</span></div>
    <div class="notice"><svg width="20" height="20" viewBox="0 0 20 20"><path d="M0 0h20v16H12l-4 4v-4H0z"/><path d="M4 4h12M4 8h12M4 12h8" stroke="#e5d6d6" stroke-width="1.300"/></svg><b>25</b></div>
  </div>
</div>
</body>
</html>
```

FILE: styles.css
```css
* { box-sizing: border-box; }
body {
  margin: 0;
  height: 100vh;
  overflow: hidden;
  display: flex;
  flex-direction: column;
  background: #f7f7f7;
  color: #111;
  font: 15px/20px "Open Sans", "Noto Sans", sans-serif;
}
button {
  border: 0;
  padding: 0;
  background: none;
  color: inherit;
  font: inherit;
  display: flex;
  align-items: center;
  justify-content: center;
}
input { border: 0; outline: 0; background: none; font: inherit; min-width: 0; }
a { color: inherit; text-decoration: none; }
svg { display: block; flex: none; }
.defs { position: absolute; width: 0; height: 0; }

/* browser frame */
.titlebar {
  height: 40px;
  flex: none;
  display: grid;
  grid-template-columns: 1fr auto 1fr;
  align-items: center;
  background: #f3f3f3;
  padding: 0 22px 0 14px;
}
.window-title { display: flex; align-items: center; gap: 10px; padding-left: 6px; font-size: 14px; }
.window-controls { justify-self: end; display: flex; gap: 44px; }
.toolbar { height: 50px; flex: none; display: flex; align-items: center; padding: 0 13px 0 23px; gap: 33px; }
.address {
  flex: 1;
  display: flex;
  align-items: center;
  height: 40px;
  padding: 0 20px;
  gap: 28px;
  margin: 0 -8px;
  background: #fff;
  border: 1px solid #cfcfcf;
  border-radius: 20px;
}
.address input {
  flex: 1;
  margin-left: -8px;
  padding: 0;
  font-size: 16px;
  color: transparent;
  background: linear-gradient(90deg, #111 67px, #777 67px);
  background-clip: text;
  -webkit-background-clip: text;
}
.workspace { flex: 1; min-height: 0; display: flex; padding: 0 5px 5px 0; }
.tabs { width: 64px; flex: none; padding: 14px 6px 0 0; display: flex; flex-direction: column; align-items: center; }
.tabs button { height: 43px; width: 40px; flex: none; margin-top: 2px; }
.tabs button:first-child { height: 18px; margin: 0; }
.tabs button:nth-child(2) { margin-top: 11px; }
.tabs button:nth-child(3) { margin-top: 1px; }
.tabs .current { height: 40px; margin-top: 4px; background: #fff; border-radius: 9px; box-shadow: 0 2px 5px #0004; }
.tabs hr { width: 40px; margin: 5px 0 1px; border: 0; border-top: 1px solid #bbb; }
.pdf { font: 700 8px "Open Sans", sans-serif; fill: #fff; }
.scrollbar {
  width: 18px;
  flex: none;
  display: flex;
  flex-direction: column;
  align-items: center;
  padding: 11px 0;
  background: #fcfcfc;
  border-radius: 0 10px 10px 0;
  box-shadow: 0 0 2px #0004;
}
.thumb { width: 11px; height: 138px; margin: auto 0 10px; border-radius: 6px; background: #8a8a8a; }

/* restaurant page */
.page {
  flex: 1;
  min-width: 0;
  position: relative;
  display: flex;
  flex-direction: column;
  overflow: hidden;
  background: #fff;
  border-radius: 10px 0 0 10px;
  box-shadow: 0 0 2px #0004;
  color: #333;
}
.menu {
  position: absolute;
  inset: 0 0 auto 0;
  z-index: 2;
  height: 101px;
  display: flex;
  align-items: center;
  justify-content: flex-end;
  gap: 52px;
  padding-right: 227px;
  background: linear-gradient(90deg, rgba(40, 40, 40, .75), rgba(255, 255, 255, .75), rgba(36, 36, 32, .75));
  color: #000;
  font: 22px/26px "Liberation Serif", serif;
}
.map { position: relative; height: 358px; flex: none; overflow: hidden; }
.map-art { width: 100%; height: 100%; }
.map text { font-family: Roboto, sans-serif; font-size: 17px; }
.street text { fill: #445063; font-weight: 500; stroke: #bfc1c4; stroke-width: 3px; paint-order: stroke; }
.street .bold { fill: #35465a; font-weight: 700; }
.park text { fill: #28785a; stroke: #a5bfae; stroke-width: 2px; paint-order: stroke; }
.map .place { fill: #70777c; }
.map .brand { fill: #b8403f; }
.map .hint { fill: #fff; font-size: 28px; }
.map .logo { font: 500 19px Lato, sans-serif; stroke: #e6e6e6; stroke-width: 3px; paint-order: stroke; }
.zoom-box { position: absolute; right: 12px; bottom: 31px; width: 50px; background: #fff; box-shadow: 0 1px 4px #0005; padding: 0 6px; }
.zoom-box button { width: 100%; height: 50px; }
.zoom-box button + button { border-top: 1px solid #ddd; }
.credits { position: absolute; right: 0; bottom: 0; display: flex; gap: 2px; font: 12px/17px Roboto, sans-serif; color: #111; }
.credits > * { background: #ffffffa6; padding: 0 8px; }
.badge { position: absolute; background: #80b500; border-radius: 12px; }
.gear { left: 0; top: 308px; width: 75px; height: 59px; z-index: 1; }
.info {
  position: relative;
  flex: 1;
  display: grid;
  grid-template-columns: repeat(4, 1fr);
  padding: 78px 11% 0;
  font: 20px/23px "Liberation Sans", sans-serif;
}
.info section { padding-left: 19px; }
.info .about { padding: 32px 32px 0 0; }
.about p { margin: 0; }
.social { display: flex; gap: 12px; margin: 31px 6px; }
.social a { width: 50px; height: 52px; border: 1px solid #333; border-radius: 50%; display: flex; align-items: center; justify-content: center; padding-bottom: 3px; fill: #333; }
h2 { margin: 0; display: flex; align-items: center; gap: 10px; color: #666; font: 700 30px/38px "Liberation Serif", serif; }
h2::before { content: ""; width: 25px; height: 3px; margin-top: 2px; border-radius: 2px; background: #80b500; }
.contact { list-style: none; margin: 23px 32px 0 0; padding: 0; display: grid; gap: 25px; }
.contact li { display: grid; grid-template-columns: 64px 1fr; align-items: start; min-height: 32px; fill: #80b500; }
.insta { margin: 41px 0 0 34px; }
.fb { margin: 36px 0 0 12px; }
.top { right: 27px; bottom: 11px; width: 65px; height: 62px; }
.copyright { height: 76px; flex: none; display: flex; align-items: center; justify-content: center; background: #80b500; color: #fff; font: 22px/26px "Liberation Serif", serif; }

/* taskbar */
.taskbar {
  height: 50px;
  flex: none;
  display: flex;
  align-items: stretch;
  background: linear-gradient(90deg, #dbd8d1 0%, #d9dbc8 25%, #dfe6c6 34%, #dbe0cf 40%, #e5e0d5 46%, #ecdfd4 51%, #e9e6df 56%, #e7e8df 66%, #e5dad7 72%, #e5d5d5 78%);
}
.start { width: 60px; flex: none; }
.search { width: 360px; flex: none; display: flex; align-items: center; gap: 12px; padding: 0 5px 0 14px; background: #fff; border: 1px solid #c8c8c8; }
.search input { flex: 1; padding: 0; font-size: 18px; }
.search input::placeholder { color: #222; opacity: 1; }
.app { width: 62px; flex: none; border-bottom: 3px solid transparent; padding-top: 3px; }
.task-view { width: 64px; padding-right: 4px; }
.active { background: #f1f2e9; }
.open { border-image: linear-gradient(90deg, transparent 5px, #cb8228 5px, #cb8228 56px, transparent 56px) 3; }
.active.open { border-image: none; border-color: #cb8228; }
.open.stacked { border-image: linear-gradient(90deg, transparent 5px, #cb8228 5px, #cb8228 46px, #dcb183 46px, #dcb183 56px, transparent 56px) 3; }
.tray { margin-left: auto; display: flex; align-items: center; gap: 11px; padding-right: 18px; }
.news { width: 196px; font-size: 17px; }
.lang { margin-left: 8px; font-size: 14px; }
.clock { width: 88px; margin-right: 5px; text-align: center; display: grid; font-size: 14px; line-height: 22px; }
.notice { position: relative; width: 34px; height: 32px; padding-top: 1px; }
.notice b { position: absolute; right: 0; bottom: -4px; width: 24px; height: 22px; border-radius: 50%; border: 1px solid #888; background: #cfc9c8; text-align: center; font-size: 12px; line-height: 20px; font-weight: 600; }
```
